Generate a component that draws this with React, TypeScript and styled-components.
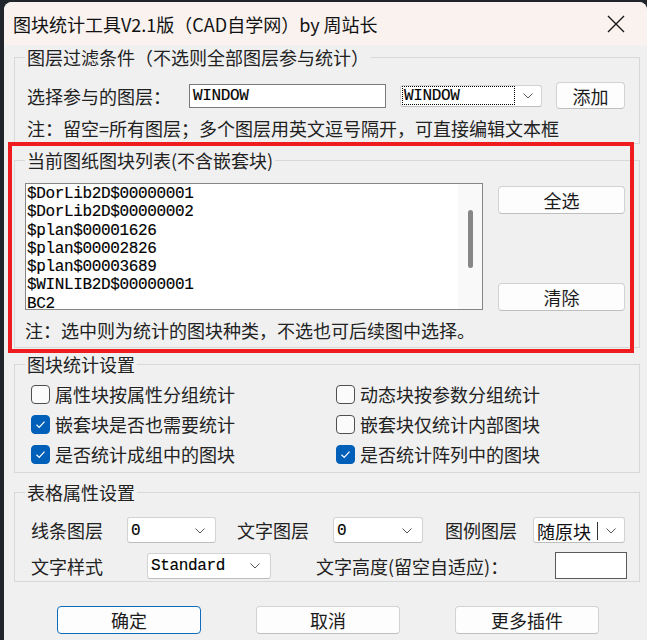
import React from "react";
import styled, { createGlobalStyle } from "styled-components";

const cjk = `"Noto Sans CJK SC", "Noto Sans", sans-serif`;
const mono = `"Liberation Mono", "Noto Sans CJK SC", monospace`;

const GlobalStyle = createGlobalStyle`
  html, body { margin: 0; padding: 0; background: #20252c; }
  body { width: 647px; height: 640px; overflow: hidden; font-family: ${cjk}; color: #1b1b1b; }
  * { box-sizing: border-box; }
`;

const Window = styled.div`
  position: relative;
  margin: 2px 0 0 4px;
  width: 643px;
  height: 638px;
  background: #f0f0f0;
  border-radius: 8px 8px 0 0;
  overflow: hidden;
  display: flex;
  flex-direction: column;
`;

const TitleBar = styled.div`
  flex: none;
  height: 43px;
  background: #f9f2ef;
  display: flex;
  align-items: center;
  justify-content: space-between;
  padding-left: 9px;
`;

const Title = styled.div`
  font-size: 18px;
  line-height: 1;
  color: #111;
`;

const CloseBtn = styled.div`
  width: 62px;
  height: 43px;
  display: flex;
  align-items: center;
  justify-content: center;
`;

const Body = styled.div`
  display: flex;
  flex-direction: column;
  padding: 2px 7px 0 10px;
`;

const Group = styled.fieldset<{ $mt: number }>`
  margin: ${(p) => p.$mt}px 0 0 0;
  padding: 0;
  border: 1px solid #d8d8d8;
  min-width: 0;
`;

const Legend = styled.legend`
  margin-left: 10px;
  padding: 0 2px;
  font-size: 18px;
  line-height: 20px;
  color: #222;
`;

const Content = styled.div<{ $pad: string }>`
  padding: ${(p) => p.$pad};
  display: flex;
  flex-direction: column;
`;

const Row = styled.div<{ $h: number; $mt?: number }>`
  display: flex;
  align-items: center;
  height: ${(p) => p.$h}px;
  margin-top: ${(p) => p.$mt ?? 0}px;
`;

const Label = styled.span<{ $w?: number; $ml?: number }>`
  font-size: 18px;
  line-height: 20px;
  white-space: nowrap;
  color: #222;
  width: ${(p) => (p.$w ? `${p.$w}px` : "auto")};
  margin-left: ${(p) => p.$ml ?? 0}px;
  flex: none;
`;

const Note = styled.div<{ $mt: number }>`
  font-size: 18px;
  line-height: 20px;
  margin-top: ${(p) => p.$mt}px;
  color: #222;
  white-space: nowrap;
`;

const monoText = `
  font-family: ${mono};
  font-size: 16px;
  letter-spacing: -0.35px;
  -webkit-text-stroke: 0.15px #000;
  color: #000;
`;

const TextInput = styled.div<{ $w: number; $h: number; $ml?: number; $border: string }>`
  flex: none;
  width: ${(p) => p.$w}px;
  height: ${(p) => p.$h}px;
  margin-left: ${(p) => p.$ml ?? 0}px;
  border: 1px solid ${(p) => p.$border};
  background: #fff;
  display: flex;
  align-items: center;
  padding: 1px 0 0 3px;
  ${monoText}
`;

const Combo = styled.div<{ $w: number; $h: number; $ml?: number }>`
  flex: none;
  width: ${(p) => p.$w}px;
  height: ${(p) => p.$h}px;
  margin-left: ${(p) => p.$ml ?? 0}px;
  border: 1px solid #d3d3d3;
  border-bottom-color: #bdbdbd;
  border-radius: 3px;
  background: #fff;
  display: flex;
  align-items: center;
  padding: 1px 0 0 3px;
`;

const ComboText = styled.span<{ $cjk?: boolean }>`
  ${(p) => (p.$cjk ? `font-family: ${cjk}; font-size: 18px; color: #111;` : monoText)}
  line-height: 18px;
  white-space: nowrap;
`;

const FocusRect = styled.span`
  display: flex;
  align-items: center;
  width: 113px;
  height: 19px;
  margin: -1px 0 0 -2px;
  padding: 1px 0 0 1px;
  border: 1px dotted #000;
`;

const Caret = styled.span`
  width: 1px;
  height: 18px;
  background: #333;
  margin-left: 6px;
`;

const ChevronBox = styled.span<{ $mr: number }>`
  margin-left: auto;
  margin-right: ${(p) => p.$mr}px;
  display: flex;
  align-items: center;
`;

const Button = styled.div<{ $w: number; $h: number; $ml?: number; $primary?: boolean }>`
  flex: none;
  width: ${(p) => p.$w}px;
  height: ${(p) => p.$h}px;
  margin-left: ${(p) => p.$ml ?? 0}px;
  border: 1px solid ${(p) => (p.$primary ? "#0f6cbd" : "#d2d2d2")};
  border-bottom-color: ${(p) => (p.$primary ? "#0f6cbd" : "#bfbfbf")};
  border-radius: 4px;
  background: #fdfdfd;
  display: flex;
  align-items: center;
  justify-content: center;
  font-size: 18px;
  color: #1b1b1b;
`;

const ListRow = styled.div`
  display: flex;
  height: 128px;
`;

const ListBox = styled.div`
  width: 458px;
  height: 127px;
  border: 1px solid #858585;
  background: #fff;
  display: flex;
  overflow: hidden;
`;

const ListItems = styled.div`
  flex: 1;
  padding: 1px 0 0 1px;
  ${monoText}
  line-height: 18.3px;
  overflow: hidden;
  white-space: nowrap;
`;

const ScrollTrack = styled.div`
  width: 24px;
  background: #f9f9f9;
  display: flex;
  flex-direction: column;
  align-items: center;
  padding-top: 26px;
`;

const ScrollThumb = styled.div`
  width: 5px;
  height: 58px;
  border-radius: 3px;
  background: #878787;
`;

const SideButtons = styled.div`
  display: flex;
  flex-direction: column;
  justify-content: space-between;
  margin-left: 15px;
  padding-top: 3px;
`;

const CheckGrid = styled.div`
  display: grid;
  grid-template-columns: 305px 1fr;
  grid-auto-rows: 30px;
`;

const CheckItem = styled.div`
  display: flex;
  align-items: center;
`;

const Box = styled.span<{ $on: boolean }>`
  flex: none;
  width: 19px;
  height: 19px;
  border-radius: 4px;
  border: 1px solid ${(p) => (p.$on ? "#005fb8" : "#4f4f4f")};
  background: ${(p) => (p.$on ? "#005fb8" : "#fbfbfb")};
  display: flex;
  align-items: center;
  justify-content: center;
`;

const CheckLabel = styled.span`
  margin-left: 5px;
  font-size: 18px;
  line-height: 20px;
  color: #222;
  white-space: nowrap;
`;

const Footer = styled.div`
  display: flex;
  padding: 24px 0 0 43px;
  gap: 55px;
`;

const RedMark = styled.div`
  position: absolute;
  left: 4px;
  top: 140px;
  width: 626px;
  height: 211px;
  border: 4px solid #ee1b1f;
  pointer-events: none;
`;

const Chevron = ({ mr = 10 }: { mr?: number }) => (
  <ChevronBox $mr={mr}>
    <svg width="10" height="6" viewBox="0 0 10 6">
      <polyline points="0.5,0.5 5,5 9.5,0.5" fill="none" stroke="#555" strokeWidth="1" />
    </svg>
  </ChevronBox>
);

const Check = ({ label, on }: { label: string; on: boolean }) => (
  <CheckItem>
    <Box $on={on}>
      {on && (
        <svg width="13" height="13" viewBox="0 0 13 13">
          <polyline points="2.5,6.8 5.2,9.4 10.5,3.6" fill="none" stroke="#fff" strokeWidth="1.2" />
        </svg>
      )}
    </Box>
    <CheckLabel>{label}</CheckLabel>
  </CheckItem>
);

const blocks = [
  "$DorLib2D$00000001",
  "$DorLib2D$00000002",
  "$plan$00001626",
  "$plan$00002826",
  "$plan$00003689",
  "$WINLIB2D$00000001",
  "BC2",
];

export default function App() {
  return (
    <>
      <GlobalStyle />
      <Window>
        <TitleBar>
          <Title>图块统计工具V2.1版（CAD自学网）by 周站长</Title>
          <CloseBtn>
            <svg width="18" height="18" viewBox="0 0 18 18">
              <path d="M1 1 L17 17 M17 1 L1 17" stroke="#1a1a1a" strokeWidth="1.4" fill="none" />
            </svg>
          </CloseBtn>
        </TitleBar>
        <Body>
          <Group $mt={0}>
            <Legend>图层过滤条件（不选则全部图层参与统计）</Legend>
            <Content $pad="15px 14px 5px 12px">
              <Row $h={27}>
                <Label $w={162}>选择参与的图层：</Label>
                <TextInput $w={197} $h={24} $border="#7a7a7a">WINDOW</TextInput>
                <Combo $w={142} $h={22} $ml={14}>
                  <FocusRect>
                    <ComboText>WINDOW</ComboText>
                  </FocusRect>
                  <Chevron mr={8} />
                </Combo>
                <Button $w={69} $h={27} $ml={14}>添加</Button>
              </Row>
              <Note $mt={9}>注：留空=所有图层；多个图层用英文逗号隔开，可直接编辑文本框</Note>
            </Content>
          </Group>

          <Group $mt={6}>
            <Legend>当前图纸图块列表(不含嵌套块)</Legend>
            <Content $pad="13px 14px 7px 10px">
              <ListRow>
                <ListBox>
                  <ListItems>
                    {blocks.map((b) => (
                      <div key={b}>{b}</div>
                    ))}
                  </ListItems>
                  <ScrollTrack>
                    <ScrollThumb />
                  </ScrollTrack>
                </ListBox>
                <SideButtons>
                  <Button $w={127} $h={28}>全选</Button>
                  <Button $w={127} $h={28}>清除</Button>
                </SideButtons>
              </ListRow>
              <Note $mt={9}>注：选中则为统计的图块种类，不选也可后续图中选择。</Note>
            </Content>
          </Group>

          <Group $mt={6}>
            <Legend>图块统计设置</Legend>
            <Content $pad="5px 14px 3px 16px">
              <CheckGrid>
                <Check label="属性块按属性分组统计" on={false} />
                <Check label="动态块按参数分组统计" on={false} />
                <Check label="嵌套块是否也需要统计" on={true} />
                <Check label="嵌套块仅统计内部图块" on={false} />
                <Check label="是否统计成组中的图块" on={true} />
                <Check label="是否统计阵列中的图块" on={true} />
              </CheckGrid>
            </Content>
          </Group>

          <Group $mt={9}>
            <Legend>表格属性设置</Legend>
            <Content $pad="15px 14px 2px 16px">
              <Row $h={26}>
                <Label $w={96}>线条图层</Label>
                <Combo $w={89} $h={26}>
                  <ComboText>0</ComboText>
                  <Chevron />
                </Combo>
                <Label $w={96} $ml={21}>文字图层</Label>
                <Combo $w={90} $h={26}>
                  <ComboText>0</ComboText>
                  <Chevron />
                </Combo>
                <Label $w={88} $ml={22}>图例图层</Label>
                <Combo $w={92} $h={26}>
                  <ComboText $cjk>随原块</ComboText>
                  <Caret />
                  <Chevron mr={8} />
                </Combo>
              </Row>
              <Row $h={27} $mt={9}>
                <Label $w={116}>文字样式</Label>
                <Combo $w={124} $h={26}>
                  <ComboText>Standard</ComboText>
                  <Chevron />
                </Combo>
                <Label $w={239} $ml={45}>文字高度(留空自适应)：</Label>
                <TextInput $w={72} $h={27} $border="#5a5a5a" />
              </Row>
            </Content>
          </Group>

          <Footer>
            <Button $w={144} $h={28} $primary>确定</Button>
            <Button $w={144} $h={28}>取消</Button>
            <Button $w={144} $h={28}>更多插件</Button>
          </Footer>
        </Body>
        <RedMark />
      </Window>
    </>
  );
}
